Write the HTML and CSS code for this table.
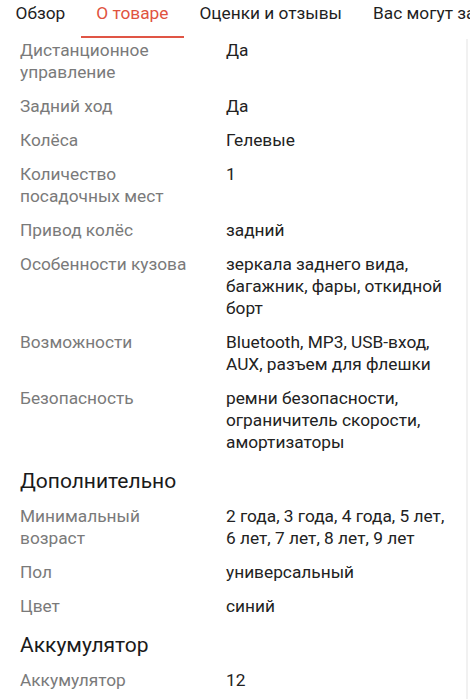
FILE: index.html
```html
<!DOCTYPE html>
<html lang="ru">
<head>
<meta charset="utf-8">
<link rel="stylesheet" href="styles.css">
</head>
<body>
<nav class="tabs">
  <div class="tab">Обзор</div>
  <div class="tab active">О товаре</div>
  <div class="tab">Оценки и отзывы</div>
  <div class="tab">Вас могут заинтересовать</div>
</nav>
<main class="content">
  <section class="specs">
    <div class="row"><div class="label">Дистанционное управление</div><div class="value">Да</div></div>
    <div class="row"><div class="label">Задний ход</div><div class="value">Да</div></div>
    <div class="row"><div class="label">Колёса</div><div class="value">Гелевые</div></div>
    <div class="row"><div class="label">Количество посадочных мест</div><div class="value">1</div></div>
    <div class="row"><div class="label">Привод колёс</div><div class="value">задний</div></div>
    <div class="row"><div class="label">Особенности кузова</div><div class="value">зеркала заднего вида, багажник, фары, откидной борт</div></div>
    <div class="row"><div class="label">Возможности</div><div class="value">Bluetooth, MP3, USB-вход, AUX, разъем для флешки</div></div>
    <div class="row"><div class="label">Безопасность</div><div class="value">ремни безопасности, ограничитель скорости, амортизаторы</div></div>
  </section>
  <section class="specs">
    <h2 class="heading">Дополнительно</h2>
    <div class="row"><div class="label">Минимальный возраст</div><div class="value">2 года, 3 года, 4 года, 5 лет, 6 лет, 7 лет, 8 лет, 9 лет</div></div>
    <div class="row"><div class="label">Пол</div><div class="value">универсальный</div></div>
    <div class="row"><div class="label">Цвет</div><div class="value">синий</div></div>
  </section>
  <section class="specs">
    <h2 class="heading">Аккумулятор</h2>
    <div class="row"><div class="label">Аккумулятор</div><div class="value">12</div></div>
  </section>
</main>
</body>
</html>
```
FILE: styles.css
```css
html, body {
  margin: 0;
  padding: 0;
  background: #ffffff;
}
body {
  width: 470px;
  height: 699px;
  overflow: hidden;
  display: flex;
  flex-direction: column;
  font-family: Roboto, "Noto Sans", "Liberation Sans", sans-serif;
  -webkit-font-smoothing: antialiased;
}
.tabs {
  display: flex;
  white-space: nowrap;
  height: 39px;
  flex: none;
  overflow: hidden;
}
.tab {
  padding: 0 15.5px;
  font-size: 17.3px;
  line-height: 26px;
  color: #1f1f1f;
  height: 36px;
  border-bottom: 2px solid transparent;
  flex: none;
}
.tab.active {
  color: #e0533f;
  border-bottom-color: #e05545;
}
.content {
  flex: 1;
  min-height: 0;
  overflow: hidden;
  margin-right: 2px;
  border-right: 2px solid #f1f1f1;
}
.specs {
  display: flex;
  flex-direction: column;
}
.row {
  display: grid;
  grid-template-columns: 206px 226px;
  margin-bottom: 12px;
  padding-left: 20px;
  font-size: 17.3px;
  line-height: 22px;
}
.label {
  color: #7a7a7a;
  padding-right: 20px;
}
.value {
  color: #222222;
}
.heading {
  margin: 2px 0 10px 0;
  padding-left: 20px;
  font-size: 21px;
  line-height: 28px;
  font-weight: 400;
  color: #1a1a1a;
}
```
